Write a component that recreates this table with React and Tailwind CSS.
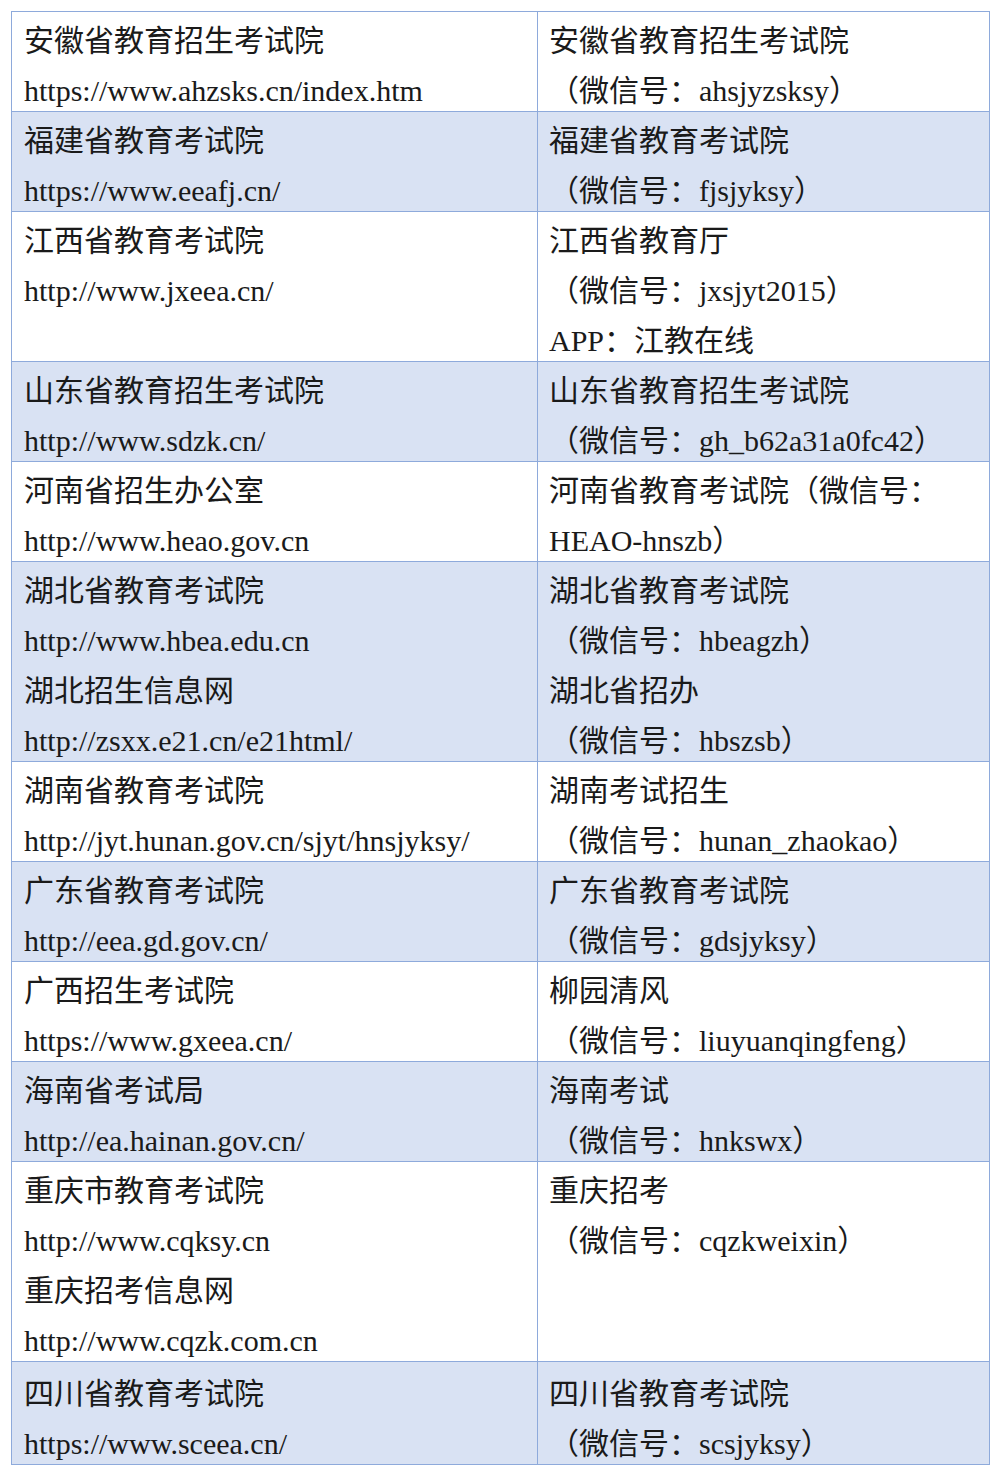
const rows = [
  {
    left: ['安徽省教育招生考试院', 'https://www.ahzsks.cn/index.htm'],
    right: ['安徽省教育招生考试院', '（微信号：ahsjyzsksy）'],
  },
  {
    shaded: true,
    left: ['福建省教育考试院', 'https://www.eeafj.cn/'],
    right: ['福建省教育考试院', '（微信号：fjsjyksy）'],
  },
  {
    left: ['江西省教育考试院', 'http://www.jxeea.cn/'],
    right: ['江西省教育厅', '（微信号：jxsjyt2015）', 'APP：江教在线'],
  },
  {
    shaded: true,
    left: ['山东省教育招生考试院', 'http://www.sdzk.cn/'],
    right: ['山东省教育招生考试院', '（微信号：gh_b62a31a0fc42）'],
  },
  {
    left: ['河南省招生办公室', 'http://www.heao.gov.cn'],
    right: ['河南省教育考试院（微信号：', 'HEAO-hnszb）'],
  },
  {
    shaded: true,
    left: ['湖北省教育考试院', 'http://www.hbea.edu.cn', '湖北招生信息网', 'http://zsxx.e21.cn/e21html/'],
    right: ['湖北省教育考试院', '（微信号：hbeagzh）', '湖北省招办', '（微信号：hbszsb）'],
  },
  {
    left: ['湖南省教育考试院', 'http://jyt.hunan.gov.cn/sjyt/hnsjyksy/'],
    right: ['湖南考试招生', '（微信号：hunan_zhaokao）'],
  },
  {
    shaded: true,
    left: ['广东省教育考试院', 'http://eea.gd.gov.cn/'],
    right: ['广东省教育考试院', '（微信号：gdsjyksy）'],
  },
  {
    left: ['广西招生考试院', 'https://www.gxeea.cn/'],
    right: ['柳园清风', '（微信号：liuyuanqingfeng）'],
  },
  {
    shaded: true,
    left: ['海南省考试局', 'http://ea.hainan.gov.cn/'],
    right: ['海南考试', '（微信号：hnkswx）'],
  },
  {
    left: ['重庆市教育考试院', 'http://www.cqksy.cn', '重庆招考信息网', 'http://www.cqzk.com.cn'],
    right: ['重庆招考', '（微信号：cqzkweixin）'],
  },
  {
    shaded: true,
    last: true,
    left: ['四川省教育考试院', 'https://www.sceea.cn/'],
    right: ['四川省教育考试院', '（微信号：scsjyksy）'],
  },
];

// each row is exactly lines*50px tall, border included, so the last line gives up 1px
const Cell = ({ lines, last, className }) => (
  <td className={`border border-[#8eaadb] align-top p-0 ${last ? 'pt-[3px]' : ''} ${className}`}>
    {lines.map((line, i) => (
      <div
        key={i}
        className={`${i === lines.length - 1 ? 'h-[49px]' : 'h-[50px]'} pt-[8px] leading-[42px] whitespace-nowrap`}
      >
        {line}
      </div>
    ))}
  </td>
);

export default function App() {
  return (
    <div
      className="min-h-[1475px] bg-white pt-[11px] pl-[11px] text-[30px] text-[#1a1a1a]"
      style={{ fontFamily: '"Liberation Serif", "Noto Sans CJK SC", serif' }}
    >
      <table className="border-collapse table-fixed w-[978px]">
        <colgroup>
          <col className="w-[526px]" />
          <col className="w-[452px]" />
        </colgroup>
        <tbody>
          {rows.map((row, i) => (
            <tr key={i} className={row.shaded ? 'bg-[#d9e2f3]' : 'bg-white'}>
              <Cell lines={row.left} last={row.last} className="pl-[12px]" />
              <Cell lines={row.right} last={row.last} className="pl-[11px]" />
            </tr>
          ))}
        </tbody>
      </table>
    </div>
  );
}
